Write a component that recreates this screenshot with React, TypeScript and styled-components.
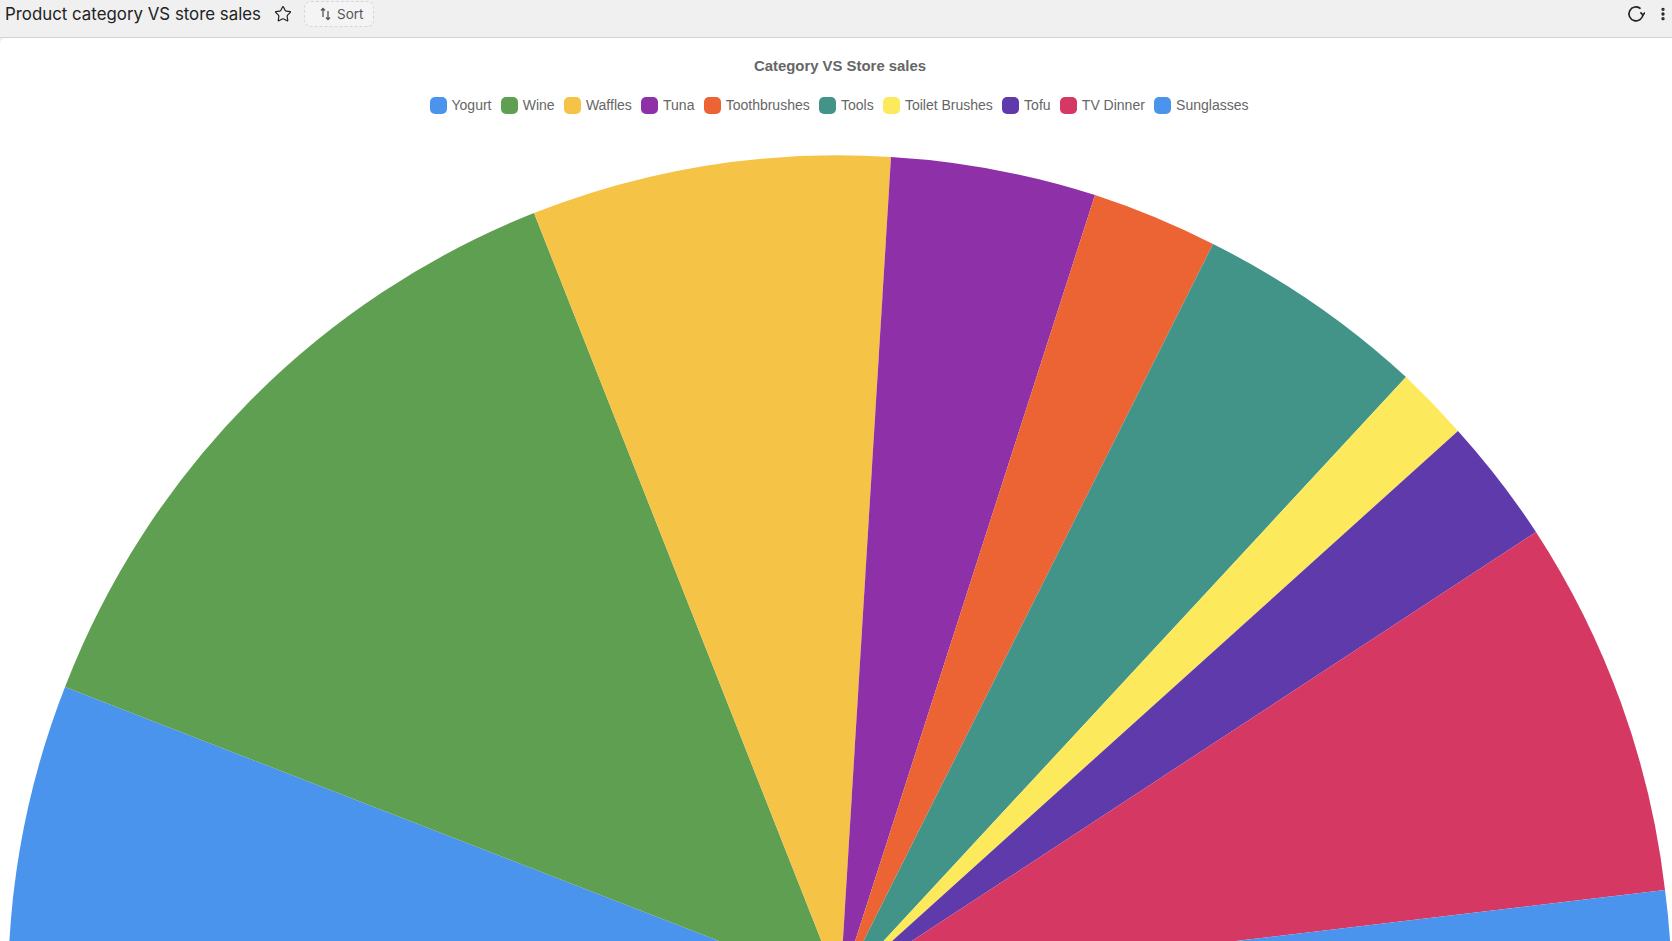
import styled, { createGlobalStyle } from 'styled-components'
import { EllipsisVertical, Star } from 'lucide-react'

const GlobalStyle = createGlobalStyle`
  html, body {
    margin: 0;
    height: 100%;
    overflow: hidden;
    background: #f0f0f0;
  }

  #root {
    height: 100%;
  }
`

const Page = styled.div`
  display: flex;
  flex-direction: column;
  height: 941px;
  font-family: 'Liberation Sans', Arial, sans-serif;
`

const Toolbar = styled.header`
  display: flex;
  align-items: center;
  flex: none;
  height: 38px;
  padding: 0 1px 9px 5px;
  box-sizing: border-box;
  border-bottom: 1px solid #d3d3d3;
  background: #f0f0f0;
`

const PageTitle = styled.h1`
  margin: 0;
  font-family: Inter, Roboto, sans-serif;
  font-size: 16.85px;
  font-weight: 400;
  color: #222;
`

const StarButton = styled.span`
  display: flex;
  margin-left: 13px;
  color: #222;
`

const SortButton = styled.button`
  display: flex;
  align-items: center;
  gap: 6px;
  height: 26px;
  margin-left: 12px;
  padding: 0 10px 0 15px;
  border: 1px dashed #d6d6d6;
  border-radius: 7px;
  background: #f4f4f4;
  font-family: Inter, Roboto, sans-serif;
  font-size: 13.5px;
  color: #555;
`

const ToolbarRight = styled.div`
  display: flex;
  align-items: center;
  gap: 10px;
  margin-left: auto;
  color: #222;
`

const Card = styled.main`
  display: flex;
  flex: 1;
  flex-direction: column;
  min-height: 0;
  padding-left: 8px;
  border-top-left-radius: 6px;
  background: #fff;
  overflow: hidden;
`

const ChartTitle = styled.h2`
  margin: 20px 0 0;
  font-size: 14.9px;
  line-height: 17px;
  font-weight: 700;
  text-align: center;
  color: #666;
`

const Legend = styled.ul`
  display: flex;
  justify-content: center;
  gap: 9.25px;
  margin: 22px 0 0;
  padding: 0 2px 0 0;
  list-style: none;
`

const LegendItem = styled.li`
  display: flex;
  align-items: center;
  gap: 5px;
  font-size: 14px;
  line-height: 17px;
  color: #666;
`

const Swatch = styled.span<{ $color: string }>`
  width: 17px;
  height: 17px;
  border-radius: 5px;
  background: ${p => p.$color};
`

const Chart = styled.svg`
  display: block;
  flex: none;
  width: 1672px;
  height: 811px;
  margin: 16px 0 0 -8px;
`

const CX = 840
const CY = 988
const R = 832

// arc end points of each slice, clockwise from the left edge
const slices = [
  { name: 'Yogurt', color: '#4a94ee', from: [8, 988], to: [65, 687] },
  { name: 'Wine', color: '#5f9f51', from: [65, 687], to: [534, 213] },
  { name: 'Waffles', color: '#f5c346', from: [534, 213], to: [891, 157] },
  { name: 'Tuna', color: '#8e30a8', from: [891, 157], to: [1095, 195] },
  { name: 'Toothbrushes', color: '#ec6434', from: [1095, 195], to: [1213, 244] },
  { name: 'Tools', color: '#429488', from: [1213, 244], to: [1406, 377] },
  { name: 'Toilet Brushes', color: '#fcea5c', from: [1406, 377], to: [1458, 431] },
  { name: 'Tofu', color: '#5f3aab', from: [1458, 431], to: [1536, 532] },
  { name: 'TV Dinner', color: '#d63864', from: [1536, 532], to: [1665, 890] },
  { name: 'Sunglasses', color: '#4a94ee', from: [1665, 890], to: [1672, 988] },
]

function SortIcon() {
  return (
    <svg width="11" height="14" viewBox="0 0 11 14" fill="none" stroke="currentColor" strokeWidth="1.3">
      <path d="M3 10V1.5M1 3.5l2-2 2 2" />
      <path d="M8 4v8.5M6 10.5l2 2 2-2" />
    </svg>
  )
}

function RefreshIcon() {
  return (
    <svg width="18" height="18" viewBox="0 0 18 18" fill="none" stroke="currentColor" strokeWidth="1.7">
      <path d="M13.6 3.6A7 7 0 1 0 16 9" />
      <path d="M13.4 7.4L16 10l2-2.6" />
    </svg>
  )
}

function App() {
  return (
    <Page>
      <GlobalStyle />
      <Toolbar>
        <PageTitle>Product category VS store sales</PageTitle>
        <StarButton>
          <Star size={18} strokeWidth={1.6} />
        </StarButton>
        <SortButton>
          <SortIcon />
          Sort
        </SortButton>
        <ToolbarRight>
          <RefreshIcon />
          <EllipsisVertical size={16} strokeWidth={3} />
        </ToolbarRight>
      </Toolbar>
      <Card>
        <ChartTitle>Category VS Store sales</ChartTitle>
        <Legend>
          {slices.map(s => (
            <LegendItem key={s.name}>
              <Swatch $color={s.color} />
              {s.name}
            </LegendItem>
          ))}
        </Legend>
        <Chart viewBox="0 130 1672 811">
          {slices.map(s => (
            <path
              key={s.name}
              fill={s.color}
              d={`M${CX} ${CY}L${s.from[0]} ${s.from[1]}A${R} ${R} 0 0 1 ${s.to[0]} ${s.to[1]}Z`}
            />
          ))}
        </Chart>
      </Card>
    </Page>
  )
}

export default App
